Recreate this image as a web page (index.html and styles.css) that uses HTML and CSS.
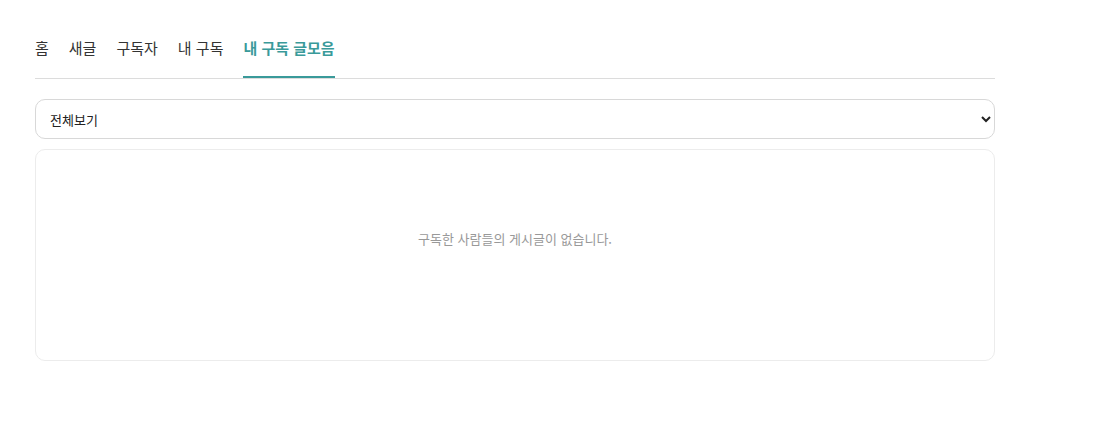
FILE: index.html
```html
<!DOCTYPE html>
<html lang="ko">
  <head>
    <meta charset="UTF-8" />
    <meta name="viewport" content="width=device-width, initial-scale=1.0" />
    <title>내 구독 글모음</title>
    <link rel="stylesheet" href="styles.css">
  </head>
  <body>
    <div class="wrap">
      <ul class="tabs">
        <li class="tab">홈</li>
        <li class="tab">새글</li>
        <li class="tab">구독자</li>
        <li class="tab">내 구독</li>
        <li class="tab active">내 구독 글모음</li>
      </ul>

      <select class="filter">
        <option>전체보기</option>
      </select>

      <div class="empty">
        <p>구독한 사람들의 게시글이 없습니다.</p>
      </div>
    </div>
  </body>
</html>
```

FILE: styles.css
```css
* {
  font-family: "Noto Sans CJK KR", "Noto Sans", sans-serif;
  box-sizing: border-box;
}

body {
  margin: 0;
  background: #fff;
  color: #333;
}

.wrap {
  width: 960px;
  margin-left: 35px;
  padding-top: 37px;
}

.tabs {
  display: flex;
  gap: 20px;
  list-style: none;
  margin: 0;
  padding: 0;
  border-bottom: 1px solid #dcdcdc;
}

.tab {
  font-size: 15px;
  line-height: 22px;
  padding-bottom: 17px;
  border-bottom: 2px solid transparent;
  color: #333;
}

.tab.active {
  color: #3a9a9a;
  font-weight: bold;
  border-bottom-color: #3a9a9a;
}

.filter {
  display: block;
  width: 100%;
  height: 40px;
  margin-top: 20px;
  padding: 0 10px;
  border: 1px solid #d8d8d8;
  border-radius: 10px;
  background: #fff;
  font-size: 13px;
  font-weight: 400;
  color: #222;
}

.empty {
  margin-top: 10px;
  min-height: 212px;
  padding-top: 79px;
  border: 1px solid #ececec;
  border-radius: 10px;
  text-align: center;
}

.empty p {
  margin: 0;
  font-size: 13px;
  line-height: 20px;
  color: #999;
}
```
